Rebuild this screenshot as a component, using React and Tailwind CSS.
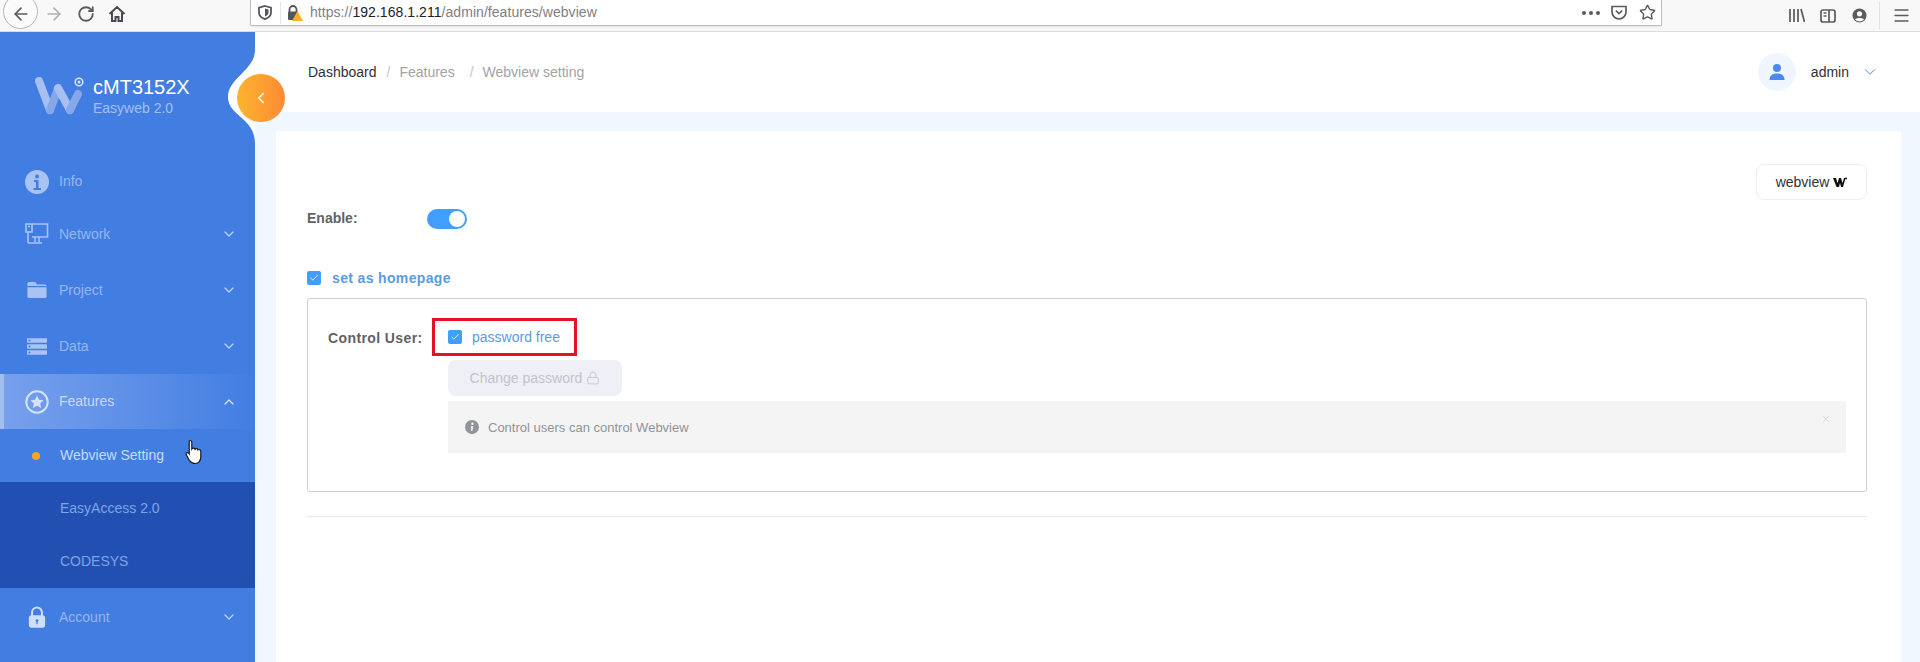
import { ChevronDown, ChevronUp, ChevronLeft, X, Check, ArrowLeft, ArrowRight, RotateCw, Star, Menu, Lock } from 'lucide-react';

const menuItems = [
  { label: 'Network', icon: 'network' },
  { label: 'Project', icon: 'project' },
  { label: 'Data', icon: 'data' },
];

const MenuIcon = ({ name }) => {
  if (name === 'info') {
    return (
      <svg width="24" height="24" viewBox="0 0 24 24">
        <circle cx="12" cy="12" r="12" fill="#a9c3f4" />
        <circle cx="12" cy="6.5" r="2" fill="#427ee2" />
        <path d="M9 10h4.5v8H16v2H8.5v-2H11v-6H9z" fill="#427ee2" />
      </svg>
    );
  }
  if (name === 'network') {
    return (
      <svg width="24" height="22" viewBox="0 0 24 22" fill="none" stroke="#a9c3f4" strokeWidth="1.6">
        <path d="M7 1h15.5v13H7" />
        <rect x="1" y="1" width="6" height="8" fill="#427ee2" />
        <path d="M3 3.5h2M3 9v11M3 20h14M10 14v5M14 14v5" />
      </svg>
    );
  }
  if (name === 'project') {
    return (
      <svg width="20" height="16" viewBox="0 0 24 20">
        <path d="M2 0h8l2 3h10a2 2 0 0 1 2 2H0V2a2 2 0 0 1 2-2z" fill="#a9c3f4" />
        <path d="M0 6.5h24V18a2 2 0 0 1-2 2H2a2 2 0 0 1-2-2z" fill="#a9c3f4" />
      </svg>
    );
  }
  if (name === 'data') {
    return (
      <svg width="20" height="17" viewBox="0 0 24 20">
        <rect x="0" y="0" width="24" height="5.6" rx="1" fill="#a9c3f4" />
        <rect x="0" y="7.2" width="24" height="5.6" rx="1" fill="#a9c3f4" />
        <rect x="0" y="14.4" width="24" height="5.6" rx="1" fill="#a9c3f4" />
        <circle cx="3" cy="2.8" r="1.2" fill="#427ee2" />
        <circle cx="3" cy="10" r="1.2" fill="#427ee2" />
        <circle cx="3" cy="17.2" r="1.2" fill="#427ee2" />
      </svg>
    );
  }
  if (name === 'features') {
    return (
      <svg width="24" height="24" viewBox="0 0 24 24">
        <circle cx="12" cy="12" r="10.7" fill="none" stroke="#d5e2fa" strokeWidth="2" />
        <path d="M12 5.5l2 4.2 4.6.6-3.4 3.2.9 4.5-4.1-2.2-4.1 2.2.9-4.5-3.4-3.2 4.6-.6z" fill="#d5e2fa" />
      </svg>
    );
  }
  return (
    <svg width="18" height="22" viewBox="0 0 20 24">
      <path d="M4.5 11V7a5.5 5.5 0 0 1 11 0v4" fill="none" stroke="#d0dff9" strokeWidth="2.2" />
      <rect x="1" y="10" width="18" height="14" rx="3" fill="#d0dff9" />
      <circle cx="10" cy="16" r="1.6" fill="#427ee2" />
      <rect x="9.3" y="16" width="1.4" height="4" fill="#427ee2" />
    </svg>
  );
};

const CheckBox = () => (
  <span className="flex h-[14px] w-[14px] shrink-0 items-center justify-center rounded-[2px] bg-[#409eff]">
    <Check className="h-[10px] w-[10px] text-white" strokeWidth={2} />
  </span>
);

const BrowserBar = () => (
  <div className="flex h-8 shrink-0 items-start border-b border-[#dcdcdc] bg-[#f8f8f8] text-[#5b5b5f]">
    <div className="flex h-[31px] w-[250px] items-center">
      <span className="ml-[3px] -mt-[8px] flex h-[35px] w-[35px] items-center justify-center rounded-full border border-[#b5b5b5] bg-[#fbfbfb]">
        <ArrowLeft className="mt-[4px] h-5 w-5" strokeWidth={2} />
      </span>
      <ArrowRight className="ml-[6px] -mt-[4px] h-5 w-5 text-[#b0b0b0]" strokeWidth={2} />
      <RotateCw className="ml-[13px] -mt-[4px] h-[18px] w-[18px]" strokeWidth={2.4} />
      <svg className="ml-[13px] -mt-[4px]" width="18" height="18" viewBox="0 0 18 18" fill="none" stroke="#4a4a4f" strokeWidth="2">
        <path d="M1.5 9L9 2l7.5 7M4 7.5V16h3.5v-4h3v4H14V7.5" />
      </svg>
    </div>
    <div className="flex h-[26px] w-[1412px] items-center rounded-br-[2px] rounded-bl-[2px] border-x border-b border-[#bdbdbd] bg-white shadow-[0_1px_2px_rgba(0,0,0,0.08)]">
      <svg className="ml-[7px]" width="14" height="15" viewBox="0 0 14 15">
        <path d="M7 1l6 1.6v5C13 11 10.5 13 7 14.2 3.5 13 1 11 1 7.600v-5z" fill="none" stroke="#55555a" strokeWidth="1.8" />
        <path d="M7 3.500l3.500 1v3c0 2-1.500 3-3.500 4z" fill="#55555a" />
      </svg>
      <span className="ml-[8px] h-[22px] w-px bg-[#e6e6e6]" />
      <svg className="ml-[6px]" width="16" height="18" viewBox="0 0 16 18">
        <path d="M2.500 8V5.500a3.500 3.500 0 0 1 7 0V8" fill="none" stroke="#55555a" strokeWidth="1.800" />
        <rect x="1" y="7.500" width="10" height="8.500" rx="1" fill="#55555a" />
        <path d="M10.500 7l5.500 10H5z" fill="#f5b324" />
      </svg>
      <span className="ml-[7px] font-['Liberation_Sans',sans-serif] text-[14px] tracking-[0.05px] text-[#808085]">
        https://<span className="text-[#222]">192.168.1.211</span>/admin/features/webview
      </span>
      <div className="ml-auto flex items-center">
        <span className="flex gap-[3px]">
          <span className="h-[4px] w-[4px] rounded-full bg-[#5b5b5f]" />
          <span className="h-[4px] w-[4px] rounded-full bg-[#5b5b5f]" />
          <span className="h-[4px] w-[4px] rounded-full bg-[#5b5b5f]" />
        </span>
        <svg className="ml-[11px]" width="16" height="15" viewBox="0 0 16 15" fill="none" stroke="#5b5b5f" strokeWidth="1.700">
          <path d="M1 1.500h14v5.500a7 7 0 0 1-14 0zM4.800 5.500L8 8.500l3.200-3" />
        </svg>
        <Star className="ml-[12px] mr-[5px] h-[17px] w-[17px]" strokeWidth={2} />
      </div>
    </div>
    <div className="flex h-[31px] flex-1 items-center text-[#5b5b5f]">
      <svg className="ml-[127px]" width="16" height="15" viewBox="0 0 16 15" fill="none" stroke="#5b5b5f" strokeWidth="1.700">
        <path d="M1 1v13M5 1v13M9 1v13M12 1l3.500 13" />
      </svg>
      <svg className="ml-[15px]" width="16" height="14" viewBox="0 0 16 14" fill="none" stroke="#5b5b5f" strokeWidth="1.700">
        <rect x="1" y="1" width="14" height="12" rx="2" />
        <path d="M9 1v12M3.500 4h3M3.500 7h3" />
      </svg>
      <svg className="ml-[16px]" width="15" height="15" viewBox="0 0 15 15">
        <circle cx="7.500" cy="7.500" r="7" fill="#5b5b5f" />
        <circle cx="7.500" cy="5.800" r="2.600" fill="#f8f8f8" />
        <path d="M3 11.500c1-2 8-2 9 0-2 2.500-7 2.500-9 0z" fill="#f8f8f8" />
      </svg>
      <span className="ml-[12px] h-[27px] w-px bg-[#e2e2e2]" />
      <Menu className="ml-[12px] h-[19px] w-[19px]" strokeWidth={2} />
    </div>
  </div>
);

const Sidebar = () => (
  <aside className="relative w-[255px] shrink-0 bg-[#427ee2] font-['Liberation_Sans',sans-serif] text-[14px]">
    <div className="flex h-[125px] items-start pl-[35px] pt-[43px]">
      <svg className="mt-[2px]" width="52" height="38" viewBox="0 0 52 38">
        <path d="M4 4l11 29" stroke="#a6c0f2" strokeWidth="8" strokeLinecap="round" fill="none" />
        <path d="M15 33l8-21" stroke="#86a8ea" strokeWidth="8" strokeLinecap="round" fill="none" />
        <path d="M23 11l12 22" stroke="#a6c0f2" strokeWidth="8" strokeLinecap="round" fill="none" />
        <path d="M35 33l8-16" stroke="#86a8ea" strokeWidth="8" strokeLinecap="round" fill="none" />
        <circle cx="44" cy="5" r="3.800" fill="none" stroke="#d7e4fb" strokeWidth="1.500" />
        <circle cx="44" cy="5" r="1.500" fill="#d7e4fb" />
      </svg>
      <div className="ml-[6px]">
        <p className="text-[20px] leading-[24px] text-white">cMT3152X</p>
        <p className="mt-[1px] text-[14px] leading-[16px] text-[#a3bff2]">Easyweb 2.0</p>
      </div>
    </div>

    <div className="flex h-[49px] items-center pl-[25px] text-[#97b5f0]">
      <MenuIcon name="info" />
      <span className="ml-[10px]">Info</span>
    </div>
    {menuItems.map((item) => (
      <div key={item.label} className="flex h-[56px] items-center pl-[25px] pr-[18px] text-[#97b5f0]">
        <span className="flex w-[24px] justify-center"><MenuIcon name={item.icon} /></span>
        <span className="ml-[10px]">{item.label}</span>
        <ChevronDown className="ml-auto h-[16px] w-[16px] text-[#c3d5f7]" strokeWidth={1.800} />
      </div>
    ))}
    <div className="flex h-[55px] items-center border-l-[4px] border-[#a3bff2] bg-gradient-to-r from-[#77a0ec] to-[#427ee2] pl-[21px] pr-[18px] text-[#c8d9f8]">
      <MenuIcon name="features" />
      <span className="ml-[10px]">Features</span>
      <ChevronUp className="ml-auto h-[16px] w-[16px] text-[#dbe6fb]" strokeWidth={1.800} />
    </div>
    <div className="flex h-[53px] items-center pl-[32px] text-[#c6dafc]">
      <span className="h-[8px] w-[8px] rounded-full bg-[#f6a623]" />
      <span className="ml-[20px]">Webview Setting</span>
    </div>
    <div className="bg-[#2150b2] text-[#7fa3e6]">
      <div className="flex h-[53px] items-center pl-[60px]">EasyAccess 2.0</div>
      <div className="flex h-[53px] items-center pl-[60px]">CODESYS</div>
    </div>
    <div className="flex h-[58px] items-center pl-[28px] pr-[18px] text-[#97b5f0]">
      <MenuIcon name="account" />
      <span className="ml-[13px]">Account</span>
      <ChevronDown className="ml-auto h-[16px] w-[16px] text-[#c3d5f7]" strokeWidth={1.800} />
    </div>

    {/* notch in the sidebar edge */}
    <svg className="absolute left-[215px] top-[18px]" width="40" height="93" viewBox="0 0 40 93">
      <path d="M40 0C40 20 13 28 13 47C13 66 40 68 40 93Z" fill="#ffffff" />
    </svg>
    <button className="absolute left-[237px] top-[42px] flex h-12 w-12 items-center justify-center rounded-full bg-gradient-to-r from-[#fdb42e] to-[#fd8a35] text-white">
      <ChevronLeft className="h-[18px] w-[18px]" strokeWidth={2} />
    </button>

    {/* mouse pointer */}
    <svg className="absolute left-[185px] top-[407px]" width="20" height="26" viewBox="0 0 20 26">
      <path d="M5 1.500c1.200 0 1.800.8 1.800 2V10c.8-1.200 2.800-1 3.200.3.800-1 2.800-.8 3 .6.900-.7 2.800-.3 2.800 1.400v6c0 3.500-2.300 6.200-5.500 6.200-3 0-4.500-1-6-3.200L1.200 15.500c-.8-1.400 1.200-2.600 2.200-1.500l.8 1V3.500c0-1.200.2-2 .8-2z" fill="#ffffff" stroke="#1a1a1a" strokeWidth="1.200" />
    </svg>
  </aside>
);

const App = () => (
  <div className="flex h-[662px] w-[1920px] flex-col overflow-hidden bg-white font-['Liberation_Sans',sans-serif]">
    <BrowserBar />
    <div className="flex min-h-0 flex-1">
      <Sidebar />
      <main className="flex min-w-0 flex-1 flex-col bg-[#f0f7ff]">
        <header className="flex h-[80px] shrink-0 items-center bg-white pl-[53px] pr-[41px] text-[14px]">
          <span className="text-[#303133]">Dashboard</span>
          <span className="ml-[10px] text-[#c0c4cc]">/</span>
          <span className="ml-[9px] text-[#a0a3aa]">Features</span>
          <span className="ml-[15px] text-[#c0c4cc]">/</span>
          <span className="ml-[9px] text-[#a0a3aa]">Webview setting</span>
          <div className="ml-auto flex items-center">
            <span className="flex h-[38px] w-[38px] items-center justify-center rounded-full bg-[#f0f6ff]">
              <svg width="18" height="18" viewBox="0 0 18 18" fill="#4a8af0">
                <circle cx="9" cy="5" r="4" />
                <path d="M1.500 17c0-4.500 3-6.500 7.500-6.500s7.500 2 7.500 6.500z" />
              </svg>
            </span>
            <span className="ml-[15px] text-[#303133]">admin</span>
            <ChevronDown className="ml-[12px] h-[18px] w-[18px] text-[#4a8af0]" strokeWidth={1.300} />
          </div>
        </header>

        <section className="ml-[21px] mr-[19px] mt-[19px] flex-1 bg-white pl-[31px] pr-[34px] pt-[33px] text-[14px]">
          <div className="flex justify-end">
            <button className="flex h-[36px] w-[111px] items-center justify-center rounded-[8px] border border-[#eceef2] bg-white text-[#303133]">
              webview
              <svg className="ml-[4px]" width="14" height="10" viewBox="0 0 14 10">
                <path d="M0 1h3l1.500 5L6 1h2l1.500 5L11 1h1.500L10 10H8L7 6 6 10H3.500z" fill="#111" />
                <circle cx="13" cy="1.500" r="1" fill="#111" />
              </svg>
            </button>
          </div>

          <div className="mt-[9px] flex h-[20px] items-center">
            <span className="-mt-[2px] w-[120px] font-bold text-[#606266]">Enable:</span>
            <span className="relative h-[20px] w-[40px] rounded-full bg-[#409eff]">
              <span className="absolute right-[2px] top-[2px] h-[16px] w-[16px] rounded-full bg-white" />
            </span>
          </div>

          <div className="mt-[42px] flex h-[14px] items-center">
            <CheckBox />
            <span className="ml-[11px] font-bold tracking-[0.35px] text-[#5b9be0]">set as homepage</span>
          </div>

          <div className="mt-[13px] h-[194px] rounded-[3px] border border-[#cfcfcf] pl-[20px] pr-[20px] pt-[19px]">
            <div className="flex items-start">
              <span className="mt-[10px] w-[120px] shrink-0 font-bold tracking-[0.4px] text-[#606266]">Control User:</span>
              <div className="min-w-0 flex-1">
                <div className="-ml-[16px] flex h-[38px] w-[145px] items-center border-[3px] border-[#e81123] pl-[13px]">
                  <CheckBox />
                  <span className="ml-[10px] text-[#5b9be0]">password free</span>
                </div>
                <button className="mt-[4px] flex h-[36px] w-[174px] items-center justify-center rounded-[8px] bg-[#eef0f5] text-[#c0c4cc]">
                  Change password
                  <Lock className="ml-[4px] h-[14px] w-[14px]" strokeWidth={1.500} />
                </button>
                <div className="relative mt-[5px] flex h-[52px] items-center bg-[#f4f4f5] pl-[17px] text-[13px] text-[#909399]">
                  <svg width="14" height="14" viewBox="0 0 14 14">
                    <circle cx="7" cy="7" r="7" fill="#909399" />
                    <circle cx="7.400" cy="3.800" r="1.200" fill="#f4f4f5" />
                    <path d="M6 6h2.200l-.8 5H6.200z" fill="#f4f4f5" />
                  </svg>
                  <span className="ml-[9px] mt-[1px]">Control users can control Webview</span>
                  <X className="absolute right-[14px] top-[12px] h-[12px] w-[12px] text-[#d0d2d6]" strokeWidth={1.500} />
                </div>
              </div>
            </div>
          </div>

          <hr className="mt-[24px] border-[#e4e7ed]" />
        </section>
      </main>
    </div>
  </div>
);

export default App;
